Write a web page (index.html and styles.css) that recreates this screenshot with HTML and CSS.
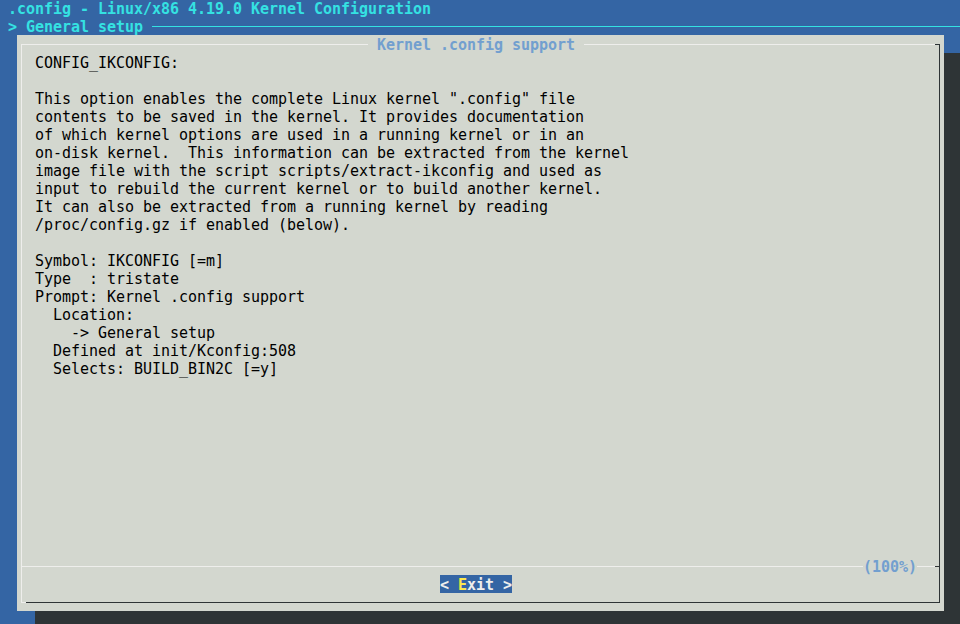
FILE: index.html
```html
<!DOCTYPE html>
<html>
<head>
<meta charset="utf-8">
<link rel="stylesheet" href="styles.css">
</head>
<body>
<div class="screen">
  <div class="hdr-title"> .config - Linux/x86 4.19.0 Kernel Configuration</div>
  <div class="hdr-crumb"><span class="crumb"> &gt; General setup </span><span class="crumb-line"></span></div>
  <div class="dialog">
    <div class="row top">
      <span class="tl"></span>
      <span class="dtitle"> Kernel .config support </span>
      <span class="tline"></span>
      <span class="tcorner"></span>
    </div>
    <div class="body"><pre class="text">CONFIG_IKCONFIG:

This option enables the complete Linux kernel ".config" file
contents to be saved in the kernel. It provides documentation
of which kernel options are used in a running kernel or in an
on-disk kernel.  This information can be extracted from the kernel
image file with the script scripts/extract-ikconfig and used as
input to rebuild the current kernel or to build another kernel.
It can also be extracted from a running kernel by reading
/proc/config.gz if enabled (below).

Symbol: IKCONFIG [=m]
Type  : tristate
Prompt: Kernel .config support
  Location:
    -&gt; General setup
  Defined at init/Kconfig:508
  Selects: BUILD_BIN2C [=y]</pre></div>
    <div class="row sep">
      <span class="sline"></span>
      <span class="pct">(100%)</span>
      <span class="sline2"></span>
      <span class="scorner"></span>
    </div>
    <div class="row btnrow">
      <span class="btn">&lt; <span class="hot">E</span>xit &gt;</span>
    </div>
    <div class="row bottom">
      <span class="bl"></span>
      <span class="bline"></span>
    </div>
  </div>
</div>
</body>
</html>
```

FILE: styles.css
```css
html, body {
  margin: 0;
  padding: 0;
  width: 960px;
  height: 624px;
  overflow: hidden;
  background: #3465a4;
}

.screen {
  margin: -1px 0 0 -1px;
  font-family: "DejaVu Sans Mono", "Liberation Mono", monospace;
  font-size: 15px;
  letter-spacing: -0.03px;
  line-height: 18px;
}

.hdr-title {
  height: 18px;
  box-sizing: border-box;
  padding-top: 2px;
  line-height: 16px;
  color: #34e2e2;
  font-weight: bold;
  white-space: pre;
}

.hdr-crumb {
  height: 18px;
  display: flex;
  align-items: center;
}

.crumb {
  color: #34e2e2;
  font-weight: bold;
  white-space: pre;
  width: 153px;
  flex: none;
  line-height: 16px;
  padding-top: 2px;
}

.crumb-line {
  flex: 1;
  height: 0;
  border-top: 1px solid #34e2e2;
  margin-top: 1px;
}

.dialog {
  margin-left: 18px;
  width: 927px;
  height: 576px;
  box-sizing: border-box;
  padding: 0 4px;
  background: #d3d7cf;
  box-shadow: 18px 18px 0 #2e3436;
  display: flex;
  flex-direction: column;
}

.row {
  height: 18px;
  display: flex;
  flex: none;
}

.top .tl {
  width: 347px;
  height: 9px;
  align-self: flex-end;
  box-sizing: border-box;
  border-top: 1px solid #eeeeec;
  border-left: 1px solid #eeeeec;
  flex: none;
}

.dtitle {
  width: 216px;
  flex: none;
  white-space: pre;
  color: #729fcf;
  font-weight: bold;
  line-height: 20px;
}

.tline {
  flex: 1;
  height: 9px;
  align-self: flex-end;
  box-sizing: border-box;
  border-top: 1px solid #eeeeec;
}

.tcorner {
  width: 5px;
  height: 9px;
  align-self: flex-end;
  box-sizing: border-box;
  border-top: 1px solid #2e3436;
  border-right: 1px solid #2e3436;
  flex: none;
}

.body {
  height: 504px;
  flex: none;
  box-sizing: border-box;
  border-left: 1px solid #eeeeec;
  border-right: 1px solid #2e3436;
  padding-left: 13px;
  padding-top: 1px;
}

.text {
  margin: 0;
  font: inherit;
  color: #000;
  white-space: pre;
}

.sep {
  box-sizing: border-box;
  border-left: 1px solid #eeeeec;
  border-right: 1px solid #2e3436;
}

.sline {
  flex: 1;
  height: 9px;
  align-self: flex-end;
  box-sizing: border-box;
  border-top: 1px solid #eeeeec;
}

.pct {
  width: 54px;
  flex: none;
  color: #729fcf;
  font-weight: bold;
  line-height: 20px;
}

.sline2 {
  width: 18px;
  flex: none;
  height: 9px;
  align-self: flex-end;
  box-sizing: border-box;
  border-top: 1px solid #eeeeec;
}

.scorner {
  width: 4px;
  flex: none;
  height: 9px;
  align-self: flex-end;
  box-sizing: border-box;
  border-top: 1px solid #2e3436;
}

.btnrow {
  box-sizing: border-box;
  border-left: 1px solid #eeeeec;
  border-right: 1px solid #2e3436;
  padding-left: 418px;
}

.btn {
  width: 72px;
  height: 18px;
  box-sizing: border-box;
  padding-top: 1px;
  line-height: 18px;
  overflow: hidden;
  background: #3465a4;
  color: #eeeeec;
  font-weight: bold;
  white-space: pre;
}

.hot {
  color: #fce94f;
}

.bl {
  width: 5px;
  height: 10px;
  flex: none;
  box-sizing: border-box;
  border-left: 1px solid #eeeeec;
  border-bottom: 1px solid #eeeeec;
}

.bline {
  flex: 1;
  height: 10px;
  box-sizing: border-box;
  border-bottom: 1px solid #2e3436;
  border-right: 1px solid #2e3436;
}
```
